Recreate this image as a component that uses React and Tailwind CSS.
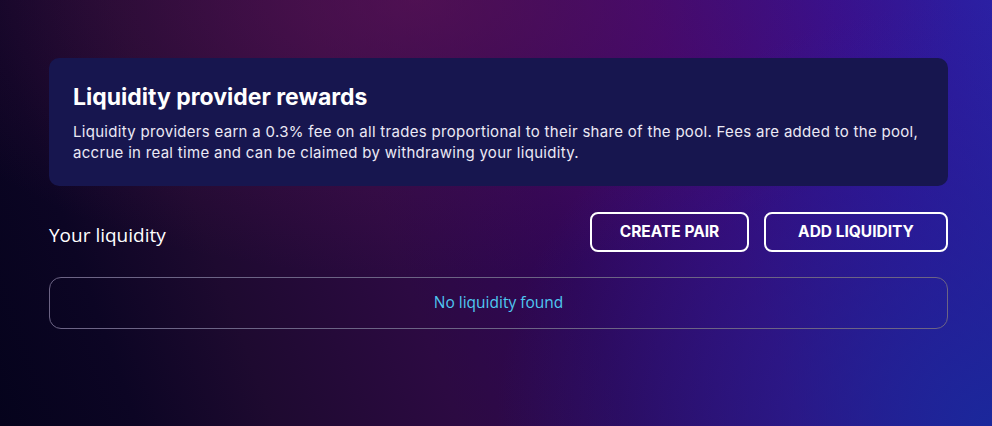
export default function App() {
  return (
    <div
      className="w-[992px] h-[426px] overflow-hidden bg-[radial-gradient(ellipse_50%_100%_at_100%_100%,rgba(24,42,156,0.9)_0%,rgba(24,42,156,0.45)_45%,rgba(24,42,156,0)_100%),radial-gradient(ellipse_55%_65%_at_42%_0%,rgba(100,22,85,0.6)_0%,rgba(100,22,85,0.25)_50%,rgba(100,22,85,0)_100%),linear-gradient(70deg,#05031c_0%,#0c0524_12%,#1e0a30_24%,#2c0a42_40%,#300656_55%,#3c0672_70%,#341092_86%,#2b20a3_100%)]"
      style={{ fontFamily: 'Inter, "Liberation Sans", sans-serif' }}
    >
      <div className="pl-[49px] pr-[44px] pt-[58px]">
        <div className="rounded-[10px] bg-[#17164f] px-6 pt-[24px] pb-[23px]">
          <h1 className="text-[23px] font-bold leading-[30px] text-white">Liquidity provider rewards</h1>
          <p className="mt-[9px] text-[15px] leading-[21px] tracking-[0.3px] text-[#ebe9f5]">
            Liquidity providers earn a 0.3% fee on all trades proportional to their share of the pool. Fees are added to the pool, accrue in real time and can be claimed by withdrawing your liquidity.
          </p>
        </div>
        <div className="mt-[26px] flex items-center justify-between">
          <h2
            className="pt-[7px] text-[19px] font-medium text-white"
            style={{ fontFamily: '"Open Sans", "Noto Sans", sans-serif' }}
          >
            Your liquidity
          </h2>
          <div className="flex gap-[15px]">
            <button className="h-[40px] w-[159px] rounded-[8px] border-2 border-white text-[15.5px] font-bold text-white">
              CREATE PAIR
            </button>
            <button className="h-[40px] w-[184px] rounded-[8px] border-2 border-white text-[15.5px] font-bold text-white">
              ADD LIQUIDITY
            </button>
          </div>
        </div>
        <div
          className="mt-[25px] flex h-[52px] items-center justify-center rounded-[12px] border border-[#6c6485] text-[15.5px] text-[#4fc8f2]"
          style={{ fontFamily: '"Open Sans", "Noto Sans", sans-serif' }}
        >
          No liquidity found
        </div>
      </div>
    </div>
  );
}
